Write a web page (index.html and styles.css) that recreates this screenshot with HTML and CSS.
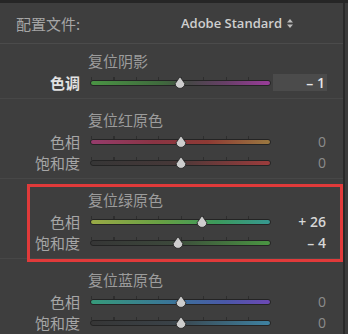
FILE: index.html
```html
<!DOCTYPE html>
<html lang="zh-CN">
<head>
    <meta charset="UTF-8">
    <meta name="viewport" content="width=device-width, initial-scale=1.0">
    <title>HSL / 校准</title>
    <link rel="stylesheet" href="styles.css">
</head>
<body>
    <div class="page">
        <div class="panel">
            <!-- 配置文件 -->
            <div class="profile">
                <span class="profile-label">配置文件:</span>
                <span class="profile-value">Adobe Standard
                    <svg class="updown" width="6" height="9" viewBox="0 0 6 9"><path d="M3 0 L6 3.5 H0 Z M0 5.5 H6 L3 9 Z" fill="#bdbdbd"/></svg>
                </span>
            </div>

            <!-- 阴影 -->
            <div class="section first">
                <div class="title">复位阴影</div>
                <div class="row">
                    <span class="label strong">色调</span>
                    <div class="slider">
                        <div class="track tone"></div>
                        <svg class="thumb" style="left: 84px" width="12" height="13" viewBox="0 0 12 13"><path d="M6 0.6 L10.8 7.6 A4.8 4.8 0 0 1 1.2 7.6 Z" fill="#cdcdcd" stroke="#262626" stroke-width="0.9"/></svg>
                    </div>
                    <span class="value boxed">– 1</span>
                </div>
            </div>

            <!-- 红原色 -->
            <div class="section">
                <div class="title">复位红原色</div>
                <div class="row">
                    <span class="label">色相</span>
                    <div class="slider">
                        <div class="track red-hue"></div>
                        <svg class="thumb" style="left: 85px" width="12" height="13" viewBox="0 0 12 13"><path d="M6 0.6 L10.8 7.6 A4.8 4.8 0 0 1 1.2 7.6 Z" fill="#cdcdcd" stroke="#262626" stroke-width="0.9"/></svg>
                    </div>
                    <span class="value zero">0</span>
                </div>
                <div class="row">
                    <span class="label">饱和度</span>
                    <div class="slider">
                        <div class="track red-sat"></div>
                        <svg class="thumb" style="left: 85px" width="12" height="13" viewBox="0 0 12 13"><path d="M6 0.6 L10.8 7.6 A4.8 4.8 0 0 1 1.2 7.6 Z" fill="#cdcdcd" stroke="#262626" stroke-width="0.9"/></svg>
                    </div>
                    <span class="value zero">0</span>
                </div>
            </div>

            <!-- 绿原色 -->
            <div class="section marked">
                <div class="title">复位绿原色</div>
                <div class="row">
                    <span class="label">色相</span>
                    <div class="slider">
                        <div class="track green-hue"></div>
                        <svg class="thumb" style="left: 106px" width="12" height="13" viewBox="0 0 12 13"><path d="M6 0.6 L10.8 7.6 A4.8 4.8 0 0 1 1.2 7.6 Z" fill="#cdcdcd" stroke="#262626" stroke-width="0.9"/></svg>
                    </div>
                    <span class="value">+ 26</span>
                </div>
                <div class="row">
                    <span class="label">饱和度</span>
                    <div class="slider">
                        <div class="track green-sat"></div>
                        <svg class="thumb" style="left: 82px" width="12" height="13" viewBox="0 0 12 13"><path d="M6 0.6 L10.8 7.6 A4.8 4.8 0 0 1 1.2 7.6 Z" fill="#cdcdcd" stroke="#262626" stroke-width="0.9"/></svg>
                    </div>
                    <span class="value">– 4</span>
                </div>
                <div class="highlight"></div>
            </div>

            <!-- 蓝原色 -->
            <div class="section">
                <div class="title">复位蓝原色</div>
                <div class="row">
                    <span class="label">色相</span>
                    <div class="slider">
                        <div class="track blue-hue"></div>
                        <svg class="thumb" style="left: 85px" width="12" height="13" viewBox="0 0 12 13"><path d="M6 0.6 L10.8 7.6 A4.8 4.8 0 0 1 1.2 7.6 Z" fill="#cdcdcd" stroke="#262626" stroke-width="0.9"/></svg>
                    </div>
                    <span class="value zero">0</span>
                </div>
                <div class="row">
                    <span class="label">饱和度</span>
                    <div class="slider">
                        <div class="track blue-sat"></div>
                        <svg class="thumb" style="left: 85px" width="12" height="13" viewBox="0 0 12 13"><path d="M6 0.6 L10.8 7.6 A4.8 4.8 0 0 1 1.2 7.6 Z" fill="#cdcdcd" stroke="#262626" stroke-width="0.9"/></svg>
                    </div>
                    <span class="value zero">0</span>
                </div>
            </div>
        </div>
    </div>
</body>
</html>
```

FILE: styles.css
```css
body {
    margin: 0;
    background-color: #3b3b3b;
    font-family: "Noto Sans CJK SC", "Noto Sans", sans-serif;
    overflow: hidden;
}
.page {
    width: 348px;
    height: 334px;
    border-top: 3px solid #262626;
    box-sizing: border-box;
}
.panel {
    width: 345px;
    height: 331px;
    box-sizing: border-box;
    background-color: #3e3e3e;
    border-right: 2px solid #292929;
    overflow: hidden;
}
.profile {
    height: 40px;
    display: flex;
    align-items: center;
    border-bottom: 1px solid #4b4b4b;
}
.profile-label {
    width: 165px;
    padding-left: 16px;
    font-size: 15px;
    color: #a6a6a6;
}
.profile-value {
    display: flex;
    align-items: center;
    gap: 5px;
    font-family: "Open Sans", "Liberation Sans", sans-serif;
    font-size: 13px;
    font-weight: 600;
    color: #cfcfcf;
}
.section {
    position: relative;
    padding: 10px 0 5px;
    border-bottom: 1px solid #474747;
}
.section.first {
    padding-top: 6px;
}
.title {
    height: 22px;
    line-height: 22px;
    padding-left: 88px;
    font-size: 15px;
    color: #9c9c9c;
}
.row {
    height: 21px;
    display: grid;
    grid-template-columns: 90px 181px 56px;
    align-items: center;
}
.label {
    padding-right: 10px;
    text-align: right;
    font-size: 15px;
    line-height: 21px;
    color: #a6a6a6;
}
.label.strong {
    color: #e2e2e2;
    font-weight: bold;
}
.slider {
    position: relative;
    height: 21px;
}
.slider::before {
    content: "";
    position: absolute;
    left: 1px;
    right: 0;
    top: 5px;
    height: 3px;
    background: repeating-linear-gradient(to right, #2e2e2e 0, #2e2e2e 1px, transparent 1px, transparent 22.5px);
}
.track {
    position: absolute;
    left: 0;
    right: 0;
    top: 8px;
    height: 6px;
    box-sizing: border-box;
    border: 1px solid #242424;
    border-radius: 3px;
}
.thumb {
    position: absolute;
    top: 4px;
}
.tone {
    background: linear-gradient(to right, #4a9444, #3f693d 40%, #474747 55%, #673f67 75%, #9a3c9a);
}
.red-hue {
    background: linear-gradient(to right, #963c6c, #8a3444 35%, #8e3a34 65%, #9a7840);
}
.red-sat {
    background: linear-gradient(to right, #363636, #463838 45%, #9c3c3c);
}
.green-hue {
    background: linear-gradient(to right, #9aaa46, #66a044 40%, #3c9a5c 70%, #369890);
}
.green-sat {
    background: linear-gradient(to right, #363636, #3c483b 45%, #4a9642);
}
.blue-hue {
    background: linear-gradient(to right, #369a7a, #3a7498 45%, #4a58a8 75%, #6c48b4);
}
.blue-sat {
    background: linear-gradient(to right, #363636, #3a4248 45%, #3e82a2);
}
.value {
    text-align: right;
    padding-right: 1px;
    font-family: "Open Sans", "Liberation Sans", sans-serif;
    font-size: 14px;
    font-weight: 600;
    color: #d6d6d6;
}
.value.boxed {
    height: 17px;
    line-height: 17px;
    margin-left: 2px;
    padding-right: 2px;
    background-color: #4b4b4b;
    color: #e6e6e6;
}
.value.zero {
    color: #8c8c8c;
    font-weight: normal;
}
.highlight {
    position: absolute;
    left: 27px;
    right: 0;
    top: 5px;
    height: 78px;
    box-sizing: border-box;
    border: 3px solid #e03a3a;
}
```
